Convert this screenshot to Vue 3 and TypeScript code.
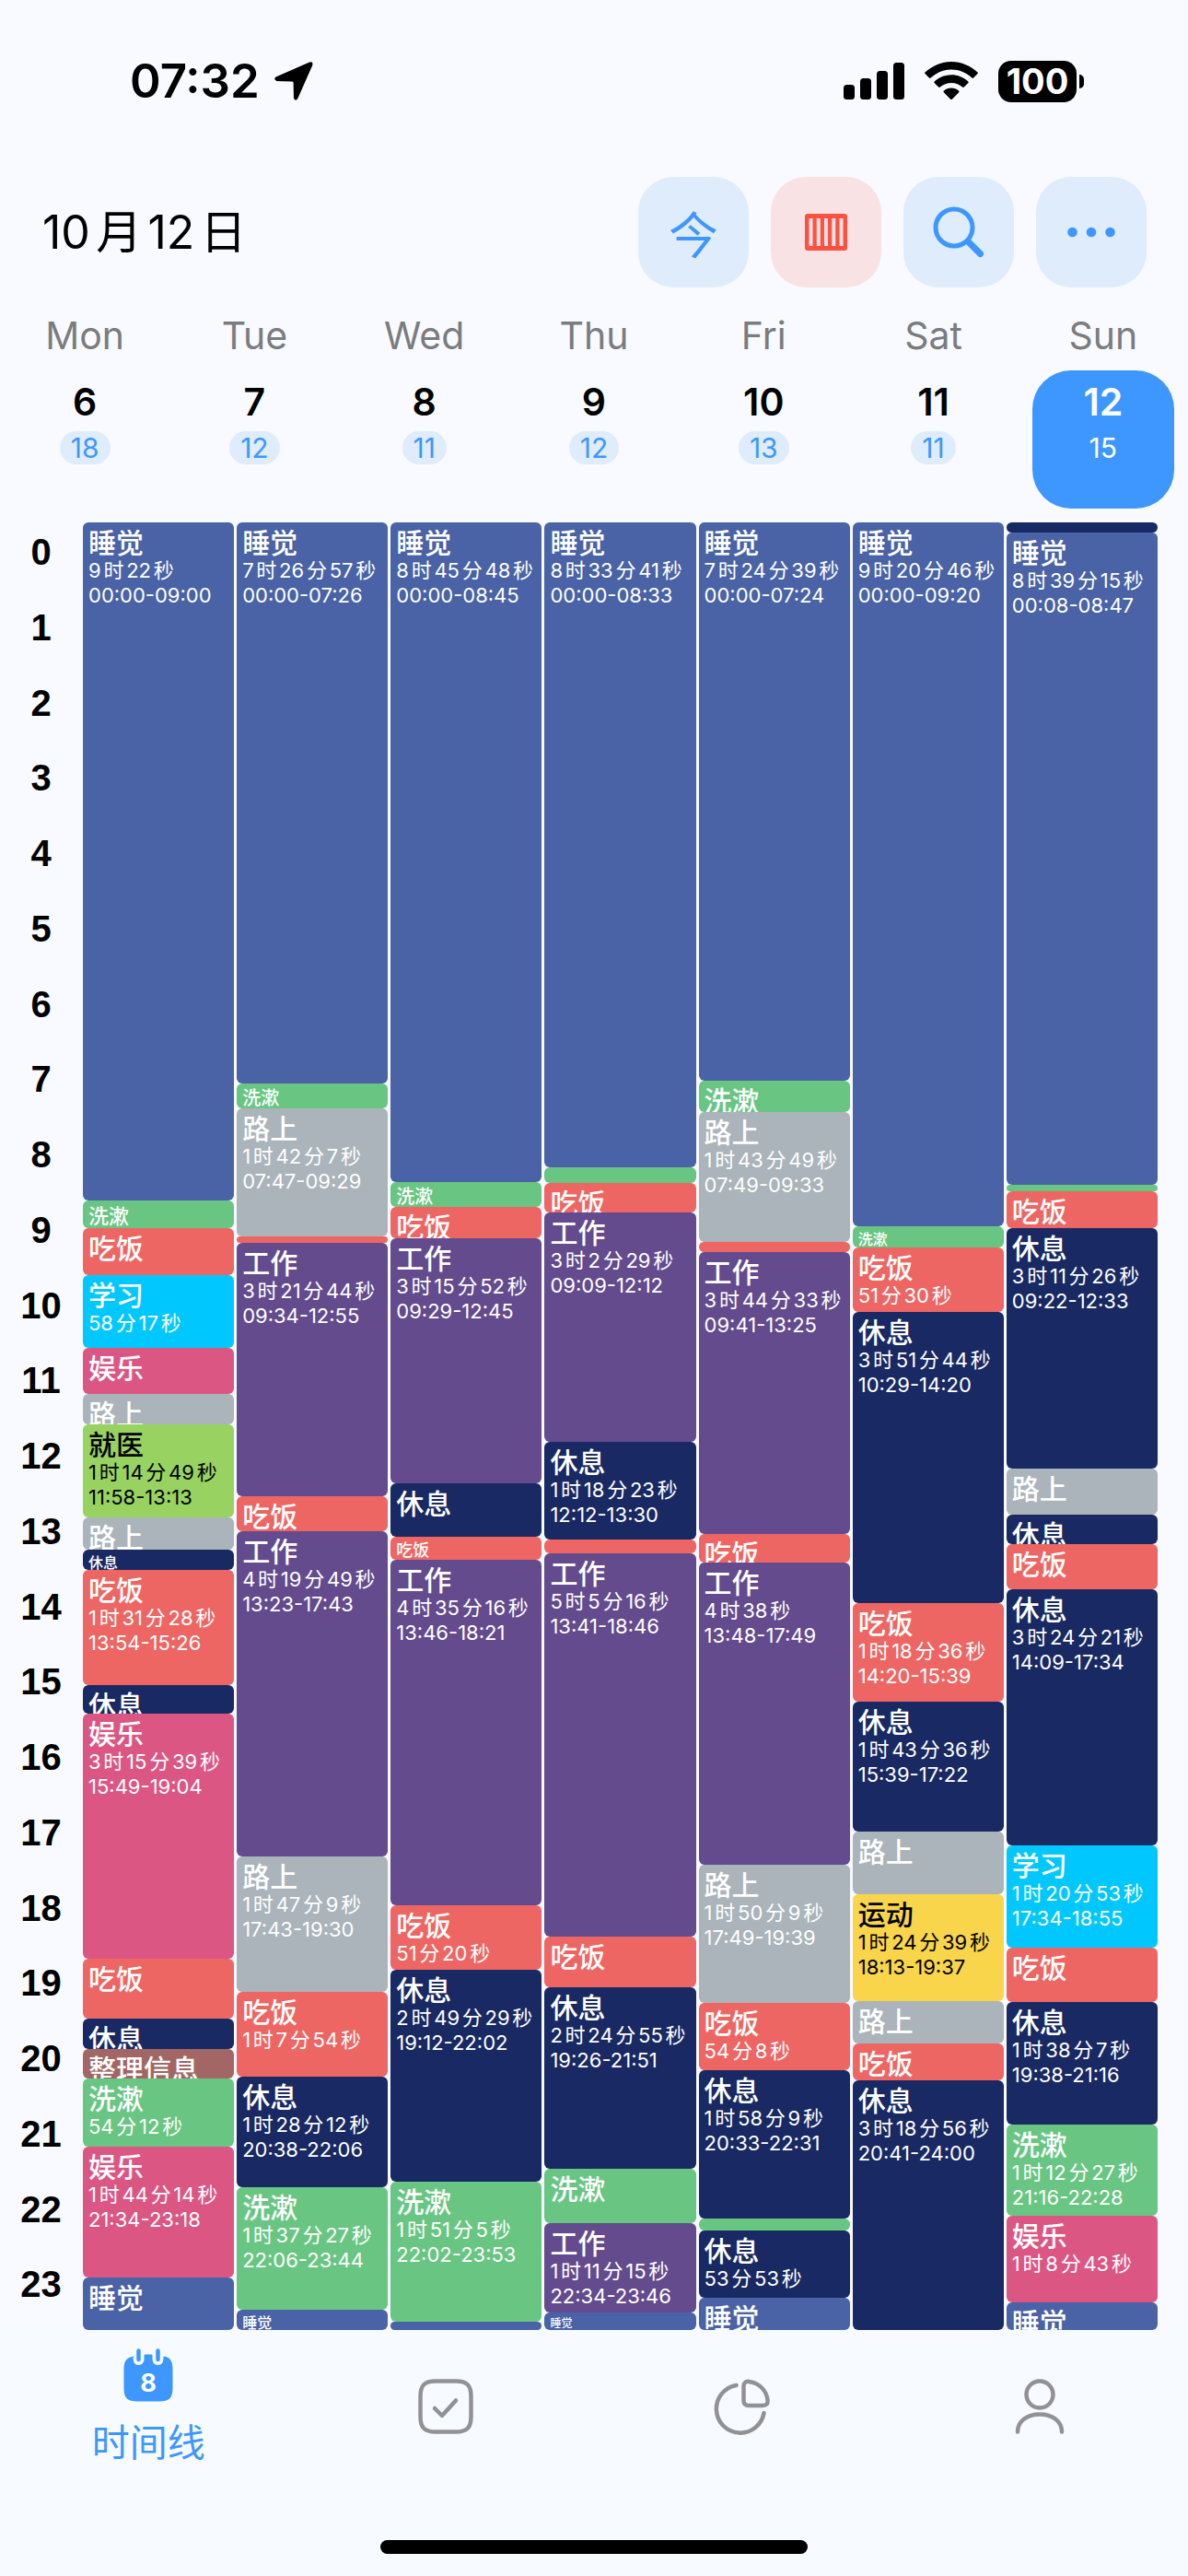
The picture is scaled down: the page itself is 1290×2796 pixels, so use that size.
<script setup lang="ts">
import { computed, ref } from 'vue'

type Kind =
  | 'sleep' | 'wash' | 'meal' | 'study' | 'fun' | 'road'
  | 'doctor' | 'rest' | 'tidy' | 'work' | 'sport'

// kind, end time, duration text, range text
type Row = [Kind, string, string?, string?]

interface Day {
  name: string
  date: number
  rows: Row[]
}

const titles: Record<Kind, string> = {
  sleep: '睡觉',
  wash: '洗漱',
  meal: '吃饭',
  study: '学习',
  fun: '娱乐',
  road: '路上',
  doctor: '就医',
  rest: '休息',
  tidy: '整理信息',
  work: '工作',
  sport: '运动',
}

const days: Day[] = [
  {
    name: 'Mon', date: 6, rows: [
      ['sleep', '09:00:22', '9时22秒', '00:00-09:00'],
      ['wash', '09:21:50'],
      ['meal', '09:59:20'],
      ['study', '10:57:50', '58分17秒'],
      ['fun', '11:34:00'],
      ['road', '11:58:15'],
      ['doctor', '13:13:00', '1时14分49秒', '11:58-13:13'],
      ['road', '13:38:15'],
      ['rest', '13:54:30'],
      ['meal', '15:26:00', '1时31分28秒', '13:54-15:26'],
      ['rest', '15:49:00'],
      ['fun', '19:04:30', '3时15分39秒', '15:49-19:04'],
      ['meal', '19:52:00'],
      ['rest', '20:16:20'],
      ['tidy', '20:39:50'],
      ['wash', '21:34:10', '54分12秒'],
      ['fun', '23:18:20', '1时44分14秒', '21:34-23:18'],
      ['sleep', '24:00:00'],
    ],
  },
  {
    name: 'Tue', date: 7, rows: [
      ['sleep', '07:26:57', '7时26分57秒', '00:00-07:26'],
      ['wash', '07:47:00'],
      ['road', '09:29:10', '1时42分7秒', '07:47-09:29'],
      ['meal', '09:34:10'],
      ['work', '12:55:50', '3时21分44秒', '09:34-12:55'],
      ['meal', '13:23:20'],
      ['work', '17:43:05', '4时19分49秒', '13:23-17:43'],
      ['road', '19:30:20', '1时47分9秒', '17:43-19:30'],
      ['meal', '20:38:10', '1时7分54秒'],
      ['rest', '22:06:20', '1时28分12秒', '20:38-22:06'],
      ['wash', '23:44:00', '1时37分27秒', '22:06-23:44'],
      ['sleep', '24:00:00'],
    ],
  },
  {
    name: 'Wed', date: 8, rows: [
      ['sleep', '08:45:48', '8时45分48秒', '00:00-08:45'],
      ['wash', '09:05:40'],
      ['meal', '09:29:55'],
      ['work', '12:45:45', '3时15分52秒', '09:29-12:45'],
      ['rest', '13:28:00'],
      ['meal', '13:46:10'],
      ['work', '18:21:25', '4时35分16秒', '13:46-18:21'],
      ['meal', '19:12:45', '51分20秒'],
      ['rest', '22:02:10', '2时49分29秒', '19:12-22:02'],
      ['wash', '23:53:15', '1时51分5秒', '22:02-23:53'],
      ['sleep', '24:00:00'],
    ],
  },
  {
    name: 'Thu', date: 9, rows: [
      ['sleep', '08:33:41', '8时33分41秒', '00:00-08:33'],
      ['wash', '08:46:00'],
      ['meal', '09:09:45'],
      ['work', '12:12:10', '3时2分29秒', '09:09-12:12'],
      ['rest', '13:30:30', '1时18分23秒', '12:12-13:30'],
      ['meal', '13:41:20'],
      ['work', '18:46:35', '5时5分16秒', '13:41-18:46'],
      ['meal', '19:26:50'],
      ['rest', '21:51:45', '2时24分55秒', '19:26-21:51'],
      ['wash', '22:34:50'],
      ['work', '23:46:05', '1时11分15秒', '22:34-23:46'],
      ['sleep', '24:00:00'],
    ],
  },
  {
    name: 'Fri', date: 10, rows: [
      ['sleep', '07:24:39', '7时24分39秒', '00:00-07:24'],
      ['wash', '07:49:40'],
      ['road', '09:33:30', '1时43分49秒', '07:49-09:33'],
      ['meal', '09:41:15'],
      ['work', '13:25:50', '3时44分33秒', '09:41-13:25'],
      ['meal', '13:48:30'],
      ['work', '17:49:00', '4时38秒', '13:48-17:49'],
      ['road', '19:39:10', '1时50分9秒', '17:49-19:39'],
      ['meal', '20:33:20', '54分8秒'],
      ['rest', '22:31:30', '1时58分9秒', '20:33-22:31'],
      ['wash', '22:40:30'],
      ['rest', '23:34:20', '53分53秒'],
      ['sleep', '24:00:00'],
    ],
  },
  {
    name: 'Sat', date: 11, rows: [
      ['sleep', '09:20:46', '9时20分46秒', '00:00-09:20'],
      ['wash', '09:37:25'],
      ['meal', '10:29:00', '51分30秒'],
      ['rest', '14:20:40', '3时51分44秒', '10:29-14:20'],
      ['meal', '15:39:20', '1时18分36秒', '14:20-15:39'],
      ['rest', '17:22:50', '1时43分36秒', '15:39-17:22'],
      ['road', '18:13:00'],
      ['sport', '19:37:45', '1时24分39秒', '18:13-19:37'],
      ['road', '20:11:30'],
      ['meal', '20:41:04'],
      ['rest', '24:00:00', '3时18分56秒', '20:41-24:00'],
    ],
  },
  {
    name: 'Sun', date: 12, rows: [
      ['rest', '00:08:15'],
      ['sleep', '08:47:30', '8时39分15秒', '00:08-08:47'],
      ['wash', '08:53:00'],
      ['meal', '09:22:00'],
      ['rest', '12:33:26', '3时11分26秒', '09:22-12:33'],
      ['road', '13:10:15'],
      ['rest', '13:34:00'],
      ['meal', '14:09:50'],
      ['rest', '17:34:12', '3时24分21秒', '14:09-17:34'],
      ['study', '18:55:05', '1时20分53秒', '17:34-18:55'],
      ['meal', '19:38:30'],
      ['rest', '21:16:35', '1时38分7秒', '19:38-21:16'],
      ['wash', '22:29:00', '1时12分27秒', '21:16-22:28'],
      ['fun', '23:37:40', '1时8分43秒'],
      ['sleep', '24:00:00'],
    ],
  },
]

const hours = Array.from({ length: 24 }, (_, h) => h)
const selected = ref(12)

const toSeconds = (t: string): number => {
  const [h, m, s] = t.split(':').map(Number)
  return h * 3600 + m * 60 + s
}

// Short entries shrink their title, and the shortest drop it.
const titleSize = (minutes: number): string => {
  if (minutes < 13) return 'none'
  if (minutes < 15) return 'xs'
  if (minutes < 17) return 's'
  if (minutes < 19) return 'm'
  if (minutes < 21) return 'l'
  if (minutes < 22) return 'xl'
  return 'full'
}

const columns = computed(() =>
  days.map((day) => {
    let start = 0
    return day.rows.map(([kind, end, duration, range], i) => {
      const stop = toSeconds(end)
      const span = stop - start
      start = stop
      return { id: i, kind, span, duration, range, size: titleSize(span / 60) }
    })
  }),
)
</script>

<template>
  <div class="screen">
    <header class="status">
      <div class="clock">
        <span>07:32</span>
        <svg width="42" height="42" viewBox="0 0 42 42" aria-hidden="true">
          <path d="M37.500 0.800 Q42.500 -1 41.200 4 L25.500 39.500 Q23.500 43.500 21 40 L20.600 22.800 Q20.600 21.400 19.200 21.400 L2.500 21 Q-1.500 19 1.500 16.500 Z" fill="#000" />
        </svg>
      </div>
      <div class="signals">
        <svg width="66" height="42" viewBox="0 0 66 42" aria-hidden="true">
          <rect x="0" y="25" width="12" height="16" rx="3.500" />
          <rect x="18" y="18" width="12" height="23" rx="3.500" />
          <rect x="36" y="10" width="12" height="31" rx="3.500" />
          <rect x="54" y="1" width="12" height="40" rx="3.500" />
        </svg>
        <svg width="58" height="42" viewBox="0 0 58 42" aria-hidden="true">
          <path d="M29 0 C40 0 50 4.500 57.500 11.500 Q58.300 12.300 57.500 13.100 L53 17.600 Q52.200 18.300 51.400 17.600 C45.500 12 37.500 8.600 29 8.600 C20.500 8.600 12.500 12 6.600 17.600 Q5.800 18.300 5 17.600 L0.500 13.100 Q-0.300 12.300 0.500 11.500 C8 4.500 18 0 29 0 Z" />
          <path d="M29 14.300 C36 14.300 42.500 17 47.300 21.500 Q48.100 22.300 47.300 23.100 L42.800 27.600 Q42 28.300 41.200 27.600 C38 24.600 33.700 22.900 29 22.900 C24.300 22.900 20 24.600 16.800 27.600 Q16 28.300 15.200 27.600 L10.700 23.100 Q9.900 22.300 10.700 21.500 C15.500 17 22 14.300 29 14.300 Z" />
          <path d="M29 28.600 C32 28.600 35 29.700 37.100 31.600 Q38 32.400 37.200 33.200 L29.800 40.700 Q29 41.500 28.200 40.700 L20.800 33.200 Q20 32.400 20.900 31.600 C23 29.700 26 28.600 29 28.600 Z" />
        </svg>
        <div class="battery"><span class="charge">100</span><span class="tip"></span></div>
      </div>
    </header>

    <section class="toolbar">
      <h1>10月12日</h1>
      <div class="tools">
        <button type="button" class="tool">今</button>
        <button type="button" class="tool active" aria-label="周视图">
          <svg width="48" height="48" viewBox="0 0 48 48" fill="currentColor" fill-rule="evenodd" aria-hidden="true">
            <path d="M4 4 H44 Q47 4 47 7 V41 Q47 44 44 44 H4 Q1 44 1 41 V7 Q1 4 4 4 Z M5.500 9 V39 H9.500 V9 Z M13.750 9 V39 H17.750 V9 Z M22 9 V39 H26 V9 Z M30.250 9 V39 H34.250 V9 Z M38.500 9 V39 H42.500 V9 Z" />
          </svg>
        </button>
        <button type="button" class="tool" aria-label="搜索">
          <svg width="56" height="56" viewBox="0 0 56 56" fill="none" stroke="currentColor" stroke-linecap="round" aria-hidden="true">
            <circle cx="23" cy="23" r="20" stroke-width="5" />
            <path d="M38.500 38.500L51.500 51.500" stroke-width="7" />
          </svg>
        </button>
        <button type="button" class="tool" aria-label="更多">
          <svg width="52" height="12" viewBox="0 0 52 12" fill="currentColor" aria-hidden="true">
            <circle cx="5.500" cy="6" r="5.300" />
            <circle cx="26" cy="6" r="5.300" />
            <circle cx="46.500" cy="6" r="5.300" />
          </svg>
        </button>
      </div>
    </section>

    <section class="week">
      <div v-for="day in days" :key="day.date" class="day">
        <span class="weekday">{{ day.name }}</span>
        <button
          type="button"
          class="date"
          :class="{ chosen: selected === day.date }"
          :aria-pressed="selected === day.date"
          @click="selected = day.date"
        >
          <span class="number">{{ day.date }}</span>
          <span class="count">{{ day.rows.length }}</span>
        </button>
      </div>
    </section>

    <main id="timeline" class="timeline">
      <div class="hours">
        <span v-for="h in hours" :key="h" class="hour">{{ h }}</span>
      </div>
      <div v-for="(column, c) in columns" :key="c" class="column">
        <article
          v-for="entry in column"
          :key="entry.id"
          class="entry"
          :class="[entry.kind, 'size-' + entry.size]"
          :style="{ flexGrow: entry.span }"
        >
          <h2 v-if="entry.size !== 'none'">{{ titles[entry.kind] }}</h2>
          <p v-if="entry.duration">{{ entry.duration }}</p>
          <p v-if="entry.range">{{ entry.range }}</p>
        </article>
      </div>
    </main>

    <footer class="bottom">
      <nav class="tabs">
        <a href="#timeline" class="tab current">
          <svg width="54" height="58" viewBox="0 0 54 58" aria-hidden="true">
            <path d="M12 8.500 C4 9.500 0.500 13 0.500 22 V43 C0.500 54 4.500 57.500 15 57.500 H39 C49.500 57.500 53.500 54 53.500 43 V22 C53.500 13 50 9.500 44 8.500 C43.500 8.500 43.500 9 43.500 10 C43.500 15 41.500 18 37.500 18 C33.500 18 31.500 15 31.500 11 V8 C31.500 6.500 31 6.500 27 6.500 C23 6.500 22.500 6.500 22.500 8 V11 C22.500 15 20.500 18 16.500 18 C12.500 18 10.500 15 10.500 10 Z" fill="#3d97ff" />
            <path d="M16.500 2.500V12M37.500 2.500V12" stroke="#3d97ff" stroke-width="4.500" stroke-linecap="round" />
            <text x="27" y="47" text-anchor="middle" fill="#fff" class="glyph-day">8</text>
          </svg>
          <span>时间线</span>
        </a>
        <a href="#todo" class="tab" aria-label="待办">
          <svg width="62" height="62" viewBox="0 0 62 62" fill="none" stroke="currentColor" stroke-width="4.500" stroke-linecap="round" stroke-linejoin="round" aria-hidden="true">
            <path d="M20 3.500 H42 C54 3.500 58.500 8 58.500 20 V42 C58.500 54 54 58.500 42 58.500 H20 C8 58.500 3.500 54 3.500 42 V20 C3.500 8 8 3.500 20 3.500 Z" />
            <path d="M19 33L27 41L42 24.500" />
          </svg>
        </a>
        <a href="#stats" class="tab" aria-label="统计">
          <svg width="62" height="62" viewBox="0 0 62 62" fill="none" stroke="currentColor" stroke-width="4.500" stroke-linecap="round" stroke-linejoin="round" aria-hidden="true">
            <path d="M24.500 8 A26 26 0 1 0 54.500 38" />
            <path d="M32.500 9 C32.500 5.500 34.500 3.600 38 3.900 C49 5 57.500 13.500 58.600 24.500 C58.900 28 57 30 53.500 30 H38 C34.500 30 32.500 28 32.500 24.500 Z" />
          </svg>
        </a>
        <a href="#me" class="tab" aria-label="我的">
          <svg width="62" height="62" viewBox="0 0 62 62" fill="none" stroke="currentColor" stroke-width="4.500" stroke-linecap="round" aria-hidden="true">
            <circle cx="31" cy="18" r="14.500" />
            <path d="M7 58.500 C7 47 17 39.500 31 39.500 C45 39.500 55 47 55 58.500" />
          </svg>
        </a>
      </nav>
      <div class="home"></div>
    </footer>
  </div>
</template>

<style>
body {
  background: #f8faff;
}
</style>

<style scoped>
.screen {
  display: flex;
  flex-direction: column;
  min-height: 100vh;
  background: #f8faff;
  color: #000;
  font-family: Inter, "Noto Sans CJK SC", sans-serif;
  text-autospace: normal;
}

button {
  border: 0;
  margin: 0;
  padding: 0;
  background: none;
  color: inherit;
  font: inherit;
  cursor: pointer;
}

h1,
h2,
p {
  margin: 0;
}

svg {
  display: block;
}

.status {
  display: flex;
  align-items: center;
  justify-content: space-between;
  height: 176px;
  padding: 0 113px 0 141px;
}

.clock {
  display: flex;
  align-items: center;
  gap: 16px;
  font-size: 51px;
  font-weight: 600;
  line-height: 60px;
}

.signals {
  display: flex;
  align-items: center;
  gap: 22px;
}

.battery {
  display: flex;
  align-items: center;
  gap: 3px;
}

.charge {
  width: 85px;
  border-radius: 14px;
  background: #000;
  color: #fff;
  font-size: 38px;
  font-weight: 700;
  line-height: 45px;
  text-align: center;
}

.tip {
  width: 5px;
  height: 15px;
  border-radius: 0 5px 5px 0;
  background: #000;
}

.toolbar {
  display: flex;
  align-items: center;
  justify-content: space-between;
  padding: 16px 45px 0 46px;
}

h1 {
  font-size: 50px;
  font-weight: 400;
  line-height: 60px;
}

.tools {
  display: flex;
  gap: 24px;
}

.tool {
  display: flex;
  align-items: center;
  justify-content: center;
  width: 120px;
  height: 120px;
  border-radius: 38px;
  background: #dfecfc;
  color: #3d97ff;
  font-size: 54px;
}

.tool.active {
  background: #f9e2e4;
  color: #ff5040;
}

.week {
  display: flex;
  padding: 28px 0 15px;
}

.day {
  flex: 1;
  display: flex;
  flex-direction: column;
  align-items: stretch;
  gap: 14px;
}

.weekday {
  color: #7b7c7e;
  font-size: 41px;
  line-height: 48px;
  text-align: center;
}

.date {
  display: flex;
  flex-direction: column;
  align-items: center;
  gap: 7px;
  height: 150px;
  margin: 0 15px;
  padding-top: 9px;
  border-radius: 42px;
}

.number {
  font-size: 41px;
  font-weight: 600;
  line-height: 50px;
}

.count {
  padding: 0 12px;
  border-radius: 18px;
  background: #dfecfc;
  color: #3d97ff;
  font-size: 30px;
  line-height: 36px;
}

.chosen {
  background: #3d97ff;
  color: #fff;
}

.chosen .count {
  background: none;
  color: #fff;
}

.timeline {
  flex: 1;
  display: flex;
  gap: 3px;
  padding-right: 33px;
}

.hours {
  display: flex;
  flex-direction: column;
  width: 87px;
}

.hour {
  flex: 1;
  padding-top: 9px;
  padding-left: 2px;
  font-family: "Liberation Sans", sans-serif;
  font-size: 40px;
  font-weight: 700;
  line-height: 46px;
  text-align: center;
}

.column {
  flex: 1;
  display: flex;
  flex-direction: column;
  min-width: 0;
}

.entry {
  flex: 0 1 0px;
  min-height: 0;
  overflow: hidden;
  box-sizing: border-box;
  padding-left: 6px;
  border-radius: 6px;
  color: #fff;
  white-space: nowrap;
}

.entry h2 {
  margin-top: 5px;
  font-size: 30px;
  font-weight: 500;
  line-height: 34px;
}

.entry p {
  font-size: 22px;
  line-height: 27px;
}

.size-xl h2 {
  font-size: 22px;
  line-height: 24px;
}

.size-l h2 {
  font-size: 20px;
  line-height: 22px;
}

.size-m h2 {
  font-size: 18px;
  line-height: 20px;
}

.size-s h2 {
  font-size: 16px;
  line-height: 18px;
}

.size-xs h2 {
  font-size: 12px;
  line-height: 14px;
}

.sleep { background: #4963a6; }
.wash { background: #68c682; }
.meal { background: #ed6663; }
.study { background: #00c8ff; }
.fun { background: #dc5683; }
.road { background: #aab4ba; }
.doctor { background: #98d361; color: #000; }
.rest { background: #192963; }
.tidy { background: #a26765; }
.work { background: #634b8e; }
.sport { background: #f8d54a; color: #000; }

.bottom {
  display: flex;
  flex-direction: column;
  align-items: center;
  justify-content: space-between;
  height: 267px;
  box-sizing: border-box;
  padding: 20px 0 24px;
  background: #f7fbff;
}

.tabs {
  display: flex;
  width: 100%;
}

.tab {
  flex: 1;
  display: flex;
  flex-direction: column;
  align-items: center;
  justify-content: center;
  gap: 20px;
  height: 126px;
  color: #919196;
  font-size: 41px;
  line-height: 48px;
  text-decoration: none;
}

.current {
  color: #3d97ff;
}

.glyph-day {
  font-size: 27px;
  font-weight: 700;
}

.home {
  width: 36%;
  height: 15px;
  border-radius: 8px;
  background: #000;
}
</style>
